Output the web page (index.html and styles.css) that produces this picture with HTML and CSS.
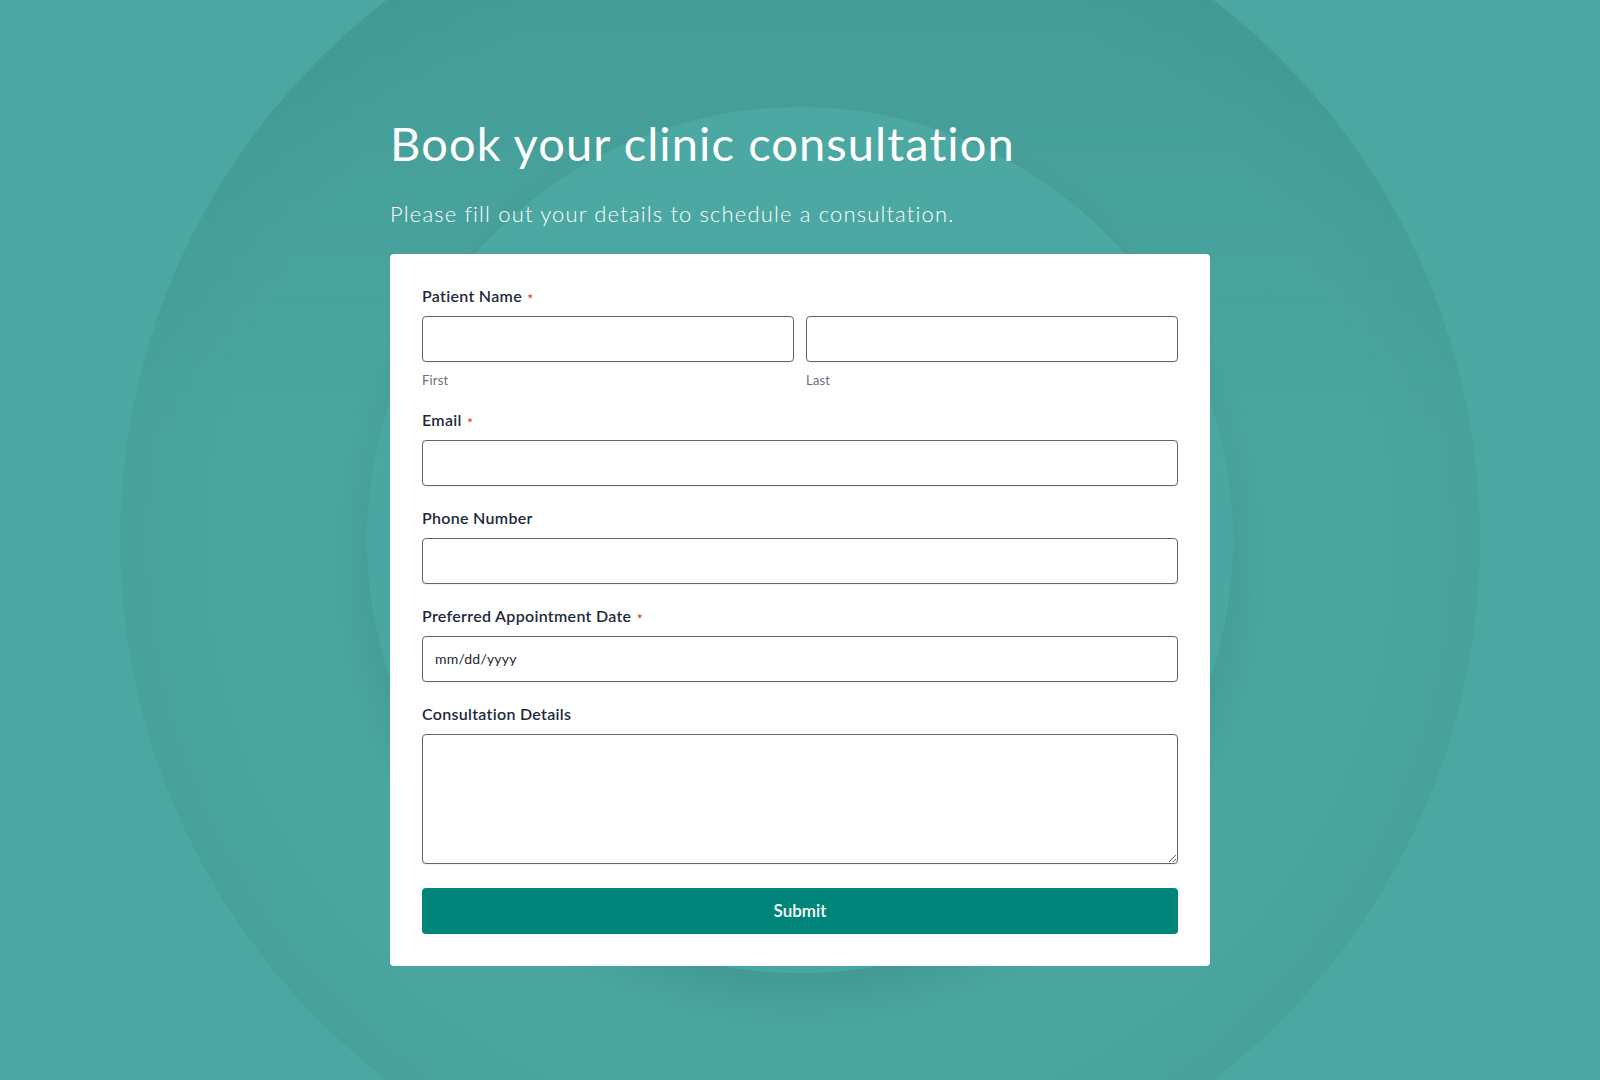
FILE: index.html
```html
<!DOCTYPE html>
<html lang="en">
<head>
<meta charset="utf-8">
<title>Book your clinic consultation</title>
<link rel="stylesheet" href="styles.css">
</head>
<body>
  <main class="page">
    <div class="wrap">
      <h1 class="title">Book your clinic consultation</h1>
      <p class="subtitle">Please fill out your details to schedule a consultation.</p>
      <form class="card">
        <div class="field">
          <label class="label">Patient Name <span class="req">*</span></label>
          <div class="name-row">
            <div class="name-col">
              <input class="input" type="text">
              <span class="sub">First</span>
            </div>
            <div class="name-col">
              <input class="input" type="text">
              <span class="sub">Last</span>
            </div>
          </div>
        </div>
        <div class="field">
          <label class="label">Email <span class="req">*</span></label>
          <input class="input" type="email">
        </div>
        <div class="field">
          <label class="label">Phone Number</label>
          <input class="input" type="tel">
        </div>
        <div class="field">
          <label class="label">Preferred Appointment Date <span class="req">*</span></label>
          <input class="input date" type="text" placeholder="mm/dd/yyyy">
        </div>
        <div class="field">
          <label class="label">Consultation Details</label>
          <textarea class="input area"></textarea>
        </div>
        <button class="submit" type="button">Submit</button>
      </form>
    </div>
  </main>
</body>
</html>
```

FILE: styles.css
```css
html, body {
  margin: 0;
  padding: 0;
}

body {
  font-family: Lato, "Open Sans", sans-serif;
  font-variant-ligatures: none;
  background: #4ba7a1;
}

.page {
  position: relative;
  overflow: hidden;
  min-height: 100vh;
  display: flex;
  justify-content: center;
  align-items: center;
}

/* decorative background circles */
.page::before {
  content: "";
  position: absolute;
  left: calc(50% - 680px);
  top: calc(50% - 680px);
  width: 1360px;
  height: 1360px;
  border-radius: 50%;
  background:
    radial-gradient(closest-side, rgba(0, 50, 40, 0) 85%, rgba(0, 50, 40, 0.035) 100%),
    linear-gradient(to bottom, rgba(0, 50, 40, 0.1) 0%, rgba(0, 50, 40, 0.05) 22%, rgba(0, 50, 40, 0.01) 42%, rgba(0, 50, 40, 0.01) 100%);
  z-index: 0;
}

.page::after {
  content: "";
  position: absolute;
  left: calc(50% - 433px);
  top: calc(50% - 433px);
  width: 866px;
  height: 866px;
  border-radius: 50%;
  background: linear-gradient(to bottom, #4ca8a2 0%, #4aa6a0 50%, #4aa6a0 100%);
  box-shadow: 0 22px 40px rgba(0, 45, 35, 0.11);
  z-index: 0;
}

.wrap {
  position: relative;
  z-index: 1;
  width: 820px;
}

.title {
  margin: 0 0 27px;
  font-weight: 400;
  font-size: 47px;
  line-height: 56px;
  letter-spacing: 1.1px;
  color: #ffffff;
}

.subtitle {
  margin: 0 0 24px;
  font-weight: 300;
  font-size: 22px;
  line-height: 32px;
  letter-spacing: 1.15px;
  color: #ffffff;
}

.card {
  background: #ffffff;
  border-radius: 4px;
  padding: 32px;
}

.field + .field {
  margin-top: 22px;
}

.label {
  display: block;
  margin-bottom: 10px;
  font-weight: 600;
  font-size: 16px;
  line-height: 20px;
  letter-spacing: 0.3px;
  color: #1d2a3b;
}

.req {
  margin-left: 1px;
  font-size: 14px;
  line-height: 0;
  color: #d6412e;
  vertical-align: -2px;
}

.name-row {
  display: grid;
  grid-template-columns: 1fr 1fr;
  column-gap: 12px;
}

.name-col {
  display: flex;
  flex-direction: column;
}

.sub {
  margin-top: 10px;
  font-size: 13px;
  line-height: 16px;
  letter-spacing: 0.2px;
  color: #6a717c;
}

.input {
  display: block;
  box-sizing: border-box;
  width: 100%;
  height: 46px;
  margin: 0;
  padding: 0 12px;
  border: 1px solid #5f6672;
  border-radius: 4px;
  background: #ffffff;
  box-shadow: 0 1px 2px rgba(0, 0, 0, 0.06);
  font-family: Lato, "Open Sans", sans-serif;
  font-size: 14px;
  letter-spacing: 0.2px;
  color: #1d2a3b;
  outline: none;
}

.date::placeholder {
  color: #24282e;
  opacity: 1;
}

.area {
  height: 130px;
  padding: 10px 12px;
  resize: vertical;
}

.submit {
  display: block;
  width: 100%;
  height: 46px;
  margin-top: 24px;
  border: none;
  border-radius: 4px;
  background: #01857b;
  color: #ffffff;
  font-family: Lato, "Open Sans", sans-serif;
  font-weight: 600;
  font-size: 17px;
  cursor: pointer;
}
```
